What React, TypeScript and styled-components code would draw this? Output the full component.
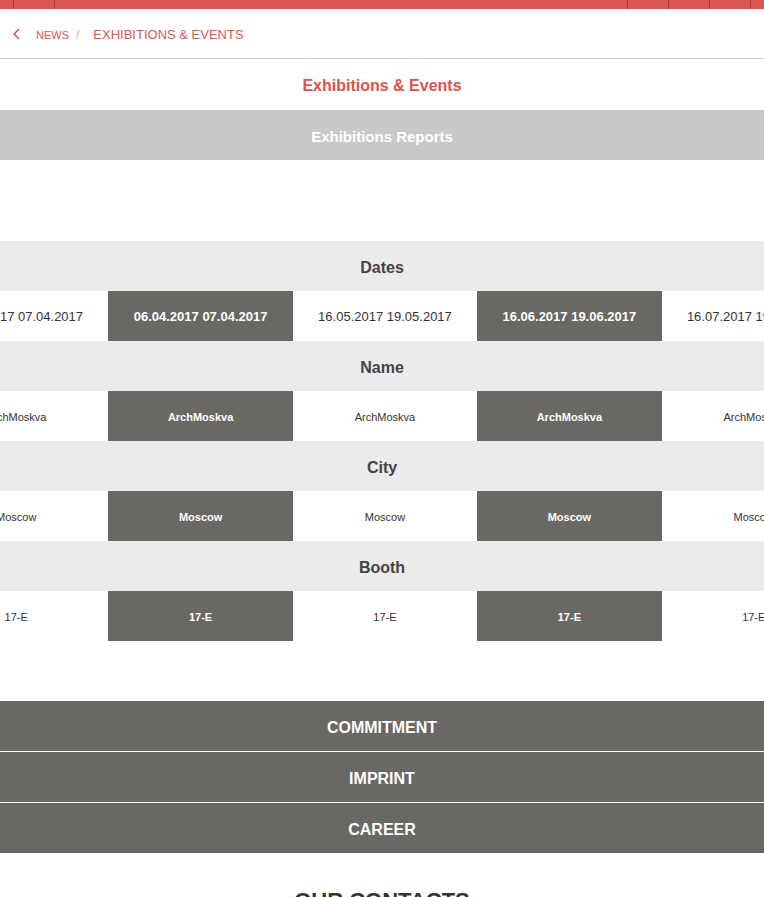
import styled, { createGlobalStyle } from "styled-components";

const GlobalStyle = createGlobalStyle`
    html, body {
        margin: 0;
        padding: 0;
        background: #ffffff;
        font-family: "Liberation Sans", Arial, sans-serif;
    }
    * {
        box-sizing: border-box;
    }
`;

const Page = styled.div`
    width: 764px;
    overflow: hidden;
`;

const TopBar = styled.div`
    display: flex;
    height: 9px;
    background: #d95656;
`;

const TopCell = styled.div<{ $w?: number }>`
    flex: ${(p) => (p.$w ? `0 0 ${p.$w}px` : "1 1 auto")};
    border-right: 1px solid #a83a3a;
    &:last-child {
        border-right: none;
    }
`;

const Breadcrumb = styled.nav`
    display: flex;
    align-items: center;
    height: 50px;
    padding: 2px 13px 0;
    border-bottom: 1px solid #cfcfcf;
    color: #d95656;

    svg {
        margin-right: 16px;
        margin-top: -1px;
    }
`;

const Crumb = styled.span`
    font-size: 11px;
    text-transform: uppercase;
    color: #d95656;
`;

const Slash = styled.span`
    font-size: 12px;
    color: #e39a9a;
    margin: 0 14px 0 7px;
`;

const Current = styled.span`
    font-size: 13px;
    text-transform: uppercase;
    color: #d95656;
`;

const PageTitle = styled.h1`
    margin: 0;
    height: 51px;
    padding-top: 3px;
    display: flex;
    align-items: center;
    justify-content: center;
    font-size: 16px;
    font-weight: 700;
    color: #d9534f;
`;

const SubBar = styled.div`
    height: 50px;
    padding-top: 2px;
    display: flex;
    align-items: center;
    justify-content: center;
    background: #c9c9c9;
    color: #ffffff;
    font-size: 15px;
    font-weight: 700;
`;

const Table = styled.section`
    margin-top: 81px;
`;

const HeadRow = styled.div`
    height: 50px;
    padding-top: 4px;
    display: flex;
    align-items: center;
    justify-content: center;
    background: #ebebeb;
    color: #444444;
    font-size: 16px;
    font-weight: 700;
`;

const DataRow = styled.div`
    height: 50px;
    overflow: hidden;
`;

const Track = styled.div`
    display: flex;
    height: 100%;
    margin-left: -76px;
`;

const Cell = styled.div<{ $dark: boolean; $small?: boolean }>`
    flex: 0 0 184.4px;
    display: flex;
    align-items: center;
    justify-content: center;
    padding-top: 1px;
    white-space: nowrap;
    font-size: ${(p) => (p.$small ? "11px" : "13px")};
    font-weight: ${(p) => (p.$dark ? 700 : 400)};
    background: ${(p) => (p.$dark ? "#6a6864" : "#ffffff")};
    color: ${(p) => (p.$dark ? "#ffffff" : "#333333")};
`;

const FooterMenu = styled.ul`
    list-style: none;
    margin: 60px 0 0;
    padding: 0;
`;

const FooterItem = styled.li`
    height: 50px;
    padding-top: 3px;
    display: flex;
    align-items: center;
    justify-content: center;
    background: #6a6864;
    color: #ffffff;
    font-size: 16px;
    font-weight: 700;
    text-transform: uppercase;
    & + & {
        margin-top: 1px;
    }
`;

const Contacts = styled.h2`
    margin: 35px 0 0;
    text-align: center;
    font-size: 22px;
    line-height: 26px;
    font-weight: 700;
    color: #333333;
    text-transform: uppercase;
`;

const rows = [
    {
        title: "Dates",
        small: false,
        values: [
            "06.04.2017 07.04.2017",
            "06.04.2017 07.04.2017",
            "16.05.2017 19.05.2017",
            "16.06.2017 19.06.2017",
            "16.07.2017 19.07.2017",
        ],
    },
    { title: "Name", small: true, values: ["ArchMoskva", "ArchMoskva", "ArchMoskva", "ArchMoskva", "ArchMoskva"] },
    { title: "City", small: true, values: ["Moscow", "Moscow", "Moscow", "Moscow", "Moscow"] },
    { title: "Booth", small: true, values: ["17-E", "17-E", "17-E", "17-E", "17-E"] },
];

function ChevronLeft() {
    return (
        <svg width="7" height="12" viewBox="0 0 7 12" fill="none">
            <path d="M6 1 L1.2 6 L6 11" stroke="#d95656" strokeWidth="1.6" />
        </svg>
    );
}

export default function App() {
    return (
        <Page>
            <GlobalStyle />
            <TopBar>
                <TopCell $w={14} />
                <TopCell $w={41} />
                <TopCell />
                <TopCell $w={41} />
                <TopCell $w={41} />
                <TopCell $w={41} />
                <TopCell $w={13} />
            </TopBar>

            <Breadcrumb>
                <ChevronLeft />
                <Crumb>News</Crumb>
                <Slash>/</Slash>
                <Current>Exhibitions &amp; Events</Current>
            </Breadcrumb>

            <PageTitle>Exhibitions &amp; Events</PageTitle>
            <SubBar>Exhibitions Reports</SubBar>

            <Table>
                {rows.map((row) => (
                    <div key={row.title}>
                        <HeadRow>{row.title}</HeadRow>
                        <DataRow>
                            <Track>
                                {row.values.map((v, i) => (
                                    <Cell key={i} $dark={i % 2 === 1} $small={row.small}>
                                        {v}
                                    </Cell>
                                ))}
                            </Track>
                        </DataRow>
                    </div>
                ))}
            </Table>

            <FooterMenu>
                <FooterItem>Commitment</FooterItem>
                <FooterItem>Imprint</FooterItem>
                <FooterItem>Career</FooterItem>
            </FooterMenu>

            <Contacts>Our contacts</Contacts>
        </Page>
    );
}
